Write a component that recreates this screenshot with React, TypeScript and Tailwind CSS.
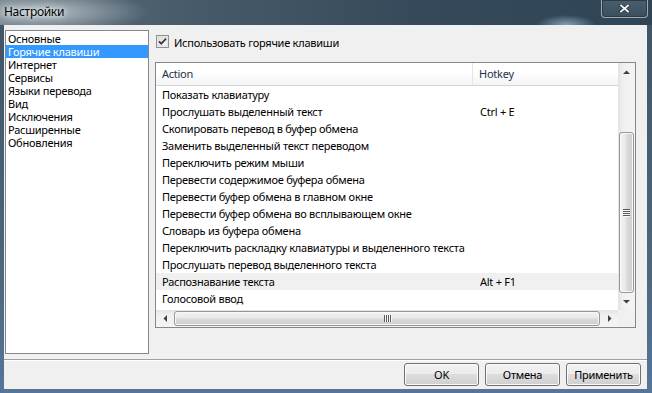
import React from "react";

const items = [
  "Основные",
  "Горячие клавиши",
  "Интернет",
  "Сервисы",
  "Языки перевода",
  "Вид",
  "Исключения",
  "Расширенные",
  "Обновления",
];

const rows: [string, string][] = [
  ["Показать клавиатуру", ""],
  ["Прослушать выделенный текст", "Ctrl + E"],
  ["Скопировать перевод в буфер обмена", ""],
  ["Заменить выделенный текст переводом", ""],
  ["Переключить режим мыши", ""],
  ["Перевести содержимое буфера обмена", ""],
  ["Перевести буфер обмена в главном окне", ""],
  ["Перевести буфер обмена во всплывающем окне", ""],
  ["Словарь из буфера обмена", ""],
  ["Переключить раскладку клавиатуры и выделенного текста", ""],
  ["Прослушать перевод выделенного текста", ""],
  ["Распознавание текста", "Alt + F1"],
  ["Голосовой ввод", ""],
];

function Tri({ dir }: { dir: "up" | "down" | "left" | "right" }) {
  const d =
    dir === "up"
      ? "M3.5 0.5L7 4H0Z"
      : dir === "down"
      ? "M0 0H7L3.5 3.5Z"
      : dir === "left"
      ? "M4 0V7L0.5 3.5Z"
      : "M0 0V7L3.5 3.5Z";
  const w = dir === "up" || dir === "down" ? 7 : 4;
  const h = dir === "up" || dir === "down" ? 4 : 7;
  return (
    <svg width={w} height={h} viewBox={`0 0 ${w} ${h}`}>
      <path d={d} fill="#404040" />
    </svg>
  );
}

function GripV() {
  return (
    <div className="flex flex-col gap-[1px]">
      {[0, 1, 2, 3].map((i) => (
        <div key={i} className="w-[7px] h-[1px] bg-[#5a5a5a] shadow-[0_1px_0_#f8f8f8]" />
      ))}
    </div>
  );
}

function GripH() {
  return (
    <div className="flex flex-row gap-[1px]">
      {[0, 1, 2, 3].map((i) => (
        <div key={i} className="w-[1px] h-[7px] bg-[#5a5a5a] shadow-[1px_0_0_#f8f8f8]" />
      ))}
    </div>
  );
}

function Btn({ label }: { label: string }) {
  return (
    <div className="w-[75px] h-[23px] rounded-[3px] border border-[#707070] bg-[linear-gradient(180deg,#f2f2f2_0%,#ebebeb_50%,#dddddd_50%,#cfcfcf_100%)] shadow-[inset_0_0_0_1px_#fbfbfb] flex items-center justify-center leading-none">
      {label}
    </div>
  );
}

export default function App() {
  return (
    <div className="w-[652px] h-[393px] flex flex-col overflow-hidden bg-[linear-gradient(180deg,#3f5464_0%,#4d677c_70%,#56759a_100%)] font-['Noto_Sans',sans-serif] text-[11px] tracking-[-0.25px] text-black">
      {/* Title bar */}
      <div className="h-[25px] flex items-start justify-between bg-[radial-gradient(110px_22px_at_40px_12px,rgba(205,212,218,0.8),transparent),radial-gradient(30px_10px_at_566px_25px,rgba(170,196,220,0.7),transparent),linear-gradient(90deg,#5e6f7b_0%,#465a69_30%,#35495a_65%,#2f4555_100%)]">
        <div className="pl-[4px] pt-[4px] text-[12px] leading-[16px] tracking-[-0.3px] text-black [text-shadow:0_0_8px_rgba(255,255,255,0.95),0_0_4px_rgba(255,255,255,0.85)]">
          Настройки
        </div>
        <div className="mr-[4px] w-[47px] h-[18px] rounded-b-[4px] border border-t-0 border-[#9fabb4] bg-[linear-gradient(180deg,#4a5e6c,#3a4f5e)] shadow-[inset_0_0_0_1px_#2a3b47] flex items-center justify-center">
          <svg width="11" height="9" viewBox="0 0 11 9">
            <path d="M2 1.5L9 7.5M9 1.5L2 7.5" stroke="#2a3640" strokeWidth="3.2" strokeLinecap="square" />
            <path d="M2 1.5L9 7.5M9 1.5L2 7.5" stroke="#f4f6f8" strokeWidth="1.8" strokeLinecap="square" />
          </svg>
        </div>
      </div>

      {/* Frame + client */}
      <div className="flex-1 min-h-0 flex pl-[4px] pr-[5px] pb-[4px]">
        <div className="flex-1 flex flex-col bg-[#f0f0f0]">
          {/* Main */}
          <div className="flex pt-[5px] pl-[1px] gap-[6px]">
            {/* Left list */}
            <div className="w-[144px] h-[324px] bg-white border border-[#828790] pt-[1px] flex flex-col">
              {items.map((it, i) => (
                <div
                  key={it}
                  className={
                    "h-[13px] leading-[14px] pl-[2px] whitespace-nowrap " +
                    (i === 1 ? "bg-[#3399ff] text-white" : "")
                  }
                >
                  {it}
                </div>
              ))}
            </div>

            {/* Right column */}
            <div className="w-[481px] flex flex-col">
              <div className="mt-[5px] h-[13px] flex items-center gap-[5px] pl-[1px]">
                <svg width="13" height="13" viewBox="0 0 13 13">
                  <defs>
                    <linearGradient id="cb" x1="0" y1="0" x2="1" y2="1">
                      <stop offset="0" stopColor="#dcdcdc" />
                      <stop offset="1" stopColor="#fbfbfb" />
                    </linearGradient>
                  </defs>
                  <rect x="0.5" y="0.5" width="12" height="12" fill="#f4f4f4" stroke="#8e8f8f" />
                  <rect x="2" y="2" width="9" height="9" fill="url(#cb)" stroke="#c9c9c9" strokeWidth="0.6" />
                  <path d="M3 6.3L5.3 8.7L10 3.6" fill="none" stroke="#3a3a3a" strokeWidth="1.7" />
                </svg>
                <span className="leading-[13px] pt-[1px] whitespace-nowrap">Использовать горячие клавиши</span>
              </div>

              {/* Table panel */}
              <div className="mt-[14px] h-[266px] border border-[#828790] bg-white flex flex-col">
                <div className="h-[247px] flex">
                  {/* Content */}
                  <div className="w-[462px] flex flex-col overflow-hidden">
                    <div className="h-[23px] flex border-b border-[#d5d5d5] bg-[linear-gradient(180deg,#ffffff_0%,#ffffff_40%,#f3f4f6_100%)] text-[#1e3148]">
                      <div className="w-[317px] pl-[6px] pt-[1px] flex items-center border-r border-[#e5e5e5]">Action</div>
                      <div className="flex-1 pl-[6px] pt-[1px] flex items-center">Hotkey</div>
                    </div>
                    {rows.map(([a, h], i) => (
                      <div
                        key={a}
                        className={"h-[17px] pt-[1px] flex items-center " + (i === 11 ? "bg-[#f0f0f0]" : "")}
                      >
                        <div className="w-[318px] pl-[6px] whitespace-nowrap overflow-hidden">{a}</div>
                        <div className="flex-1 pl-[6px] whitespace-nowrap">{h}</div>
                      </div>
                    ))}
                  </div>
                  {/* Vertical scrollbar */}
                  <div className="w-[17px] flex flex-col bg-[linear-gradient(90deg,#e3e3e3,#f0f0f0_30%,#f4f4f4)]">
                    <div className="h-[17px] flex items-center justify-center">
                      <Tri dir="up" />
                    </div>
                    <div className="h-[52px]" />
                    <div className="h-[161px] mx-[1px] rounded-[3px] border border-[#979797] bg-[linear-gradient(90deg,#f3f3f3_0%,#e8e8e8_45%,#d9d9d9_55%,#cfcfcf_100%)] shadow-[inset_0_0_0_1px_#f8f8f8] flex items-center justify-center">
                      <GripV />
                    </div>
                    <div className="h-[17px] flex items-center justify-center">
                      <Tri dir="down" />
                    </div>
                  </div>
                </div>
                {/* Horizontal scrollbar */}
                <div className="h-[17px] flex">
                  <div className="w-[462px] flex bg-[linear-gradient(180deg,#e3e3e3,#f0f0f0_30%,#f4f4f4)]">
                    <div className="w-[17px] flex items-center justify-center">
                      <Tri dir="left" />
                    </div>
                    <div className="flex-1 my-[1px] mx-[1px] rounded-[3px] border border-[#979797] bg-[linear-gradient(180deg,#f3f3f3_0%,#e8e8e8_45%,#d9d9d9_55%,#cfcfcf_100%)] shadow-[inset_0_0_0_1px_#f8f8f8] flex items-center justify-center">
                      <GripH />
                    </div>
                    <div className="w-[17px] flex items-center justify-center">
                      <Tri dir="right" />
                    </div>
                  </div>
                  <div className="w-[17px] bg-[#f0f0f0]" />
                </div>
              </div>
            </div>
          </div>

          {/* Separator */}
          <div className="mt-[5px] h-[1px] bg-[#a0a0a0]" />
          <div className="h-[1px] bg-white" />

          {/* Buttons */}
          <div className="mt-[2px] flex justify-end gap-[6px] pr-[6px]">
            <Btn label="OK" />
            <Btn label="Отмена" />
            <Btn label="Применить" />
          </div>
        </div>
      </div>
    </div>
  );
}
